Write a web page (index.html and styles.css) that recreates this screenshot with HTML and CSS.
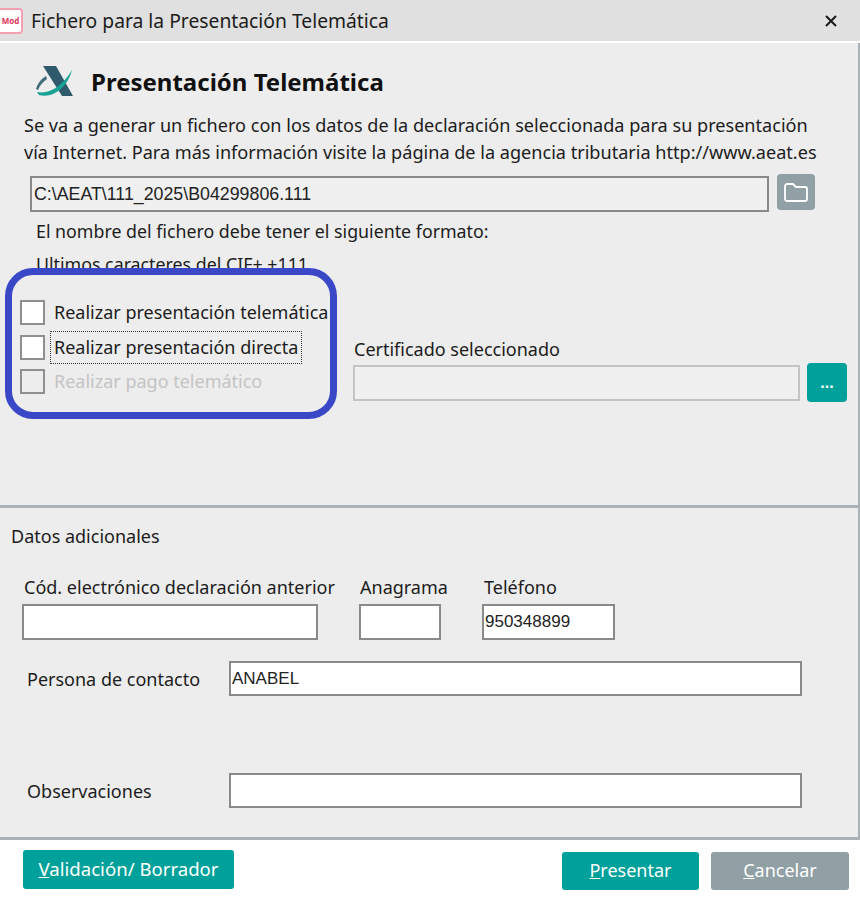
FILE: index.html
```html
<!DOCTYPE html>
<html lang="es">
<head>
    <meta charset="UTF-8">
    <title>Fichero para la Presentación Telemática</title>
    <link rel="stylesheet" href="styles.css">
</head>
<body>
    <div class="titlebar">
        <span class="app-icon">Mod</span>
        <span class="title">Fichero para la Presentación Telemática</span>
        <svg class="close" viewBox="0 0 12 12" width="12" height="12"><path d="M1 1l10 10M11 1L1 11" stroke="#1a1a1a" stroke-width="2" fill="none"/></svg>
    </div>

    <div class="panel top">
        <div class="heading">
            <svg class="logo" viewBox="0 0 37 30" width="37" height="30">
                <path d="M7 0H20L37 30H26Z" fill="#2f5a6b"/>
                <path d="M0 23C2 17 5 13 10 10L11 13C7 16 4 19 2 24Z" fill="#3f6d7c"/>
                <path d="M1 26C14 29 28 18 36 4C32 20 18 33 3 29Z" fill="#17a394"/>
            </svg>
            <h1>Presentación Telemática</h1>
        </div>
        <p class="intro">Se va a generar un fichero con los datos de la declaración seleccionada para su presentación<br>vía Internet. Para más información visite la página de la agencia tributaria http://www.aeat.es</p>
        <div class="file-row">
            <input class="field readonly file" type="text" value="C:\AEAT\111_2025\B04299806.111">
            <button class="icon-btn grey">
                <svg viewBox="0 0 26 22" width="26" height="22"><path d="M2 5a2 2 0 0 1 2-2h6l3 3h9a2 2 0 0 1 2 2v10a2 2 0 0 1-2 2H4a2 2 0 0 1-2-2Z" fill="none" stroke="#fff" stroke-width="1.8"/></svg>
            </button>
        </div>
        <p class="note">El nombre del fichero debe tener el siguiente formato:</p>
        <p class="note second">Ultimos caracteres del CIF+.+111</p>
        <div class="options">
            <div class="checks">
                <label class="check"><input type="checkbox"><span>Realizar presentación telemática</span></label>
                <label class="check"><input type="checkbox"><span class="focused">Realizar presentación directa</span></label>
                <label class="check off"><input type="checkbox" disabled><span>Realizar pago telemático</span></label>
            </div>
            <div class="cert">
                <div class="cert-label">Certificado seleccionado</div>
                <div class="cert-row">
                    <input class="field disabled cert-input" type="text">
                    <button class="icon-btn teal dots">...</button>
                </div>
            </div>
        </div>
        <div class="oval"></div>
    </div>

    <div class="panel extra">
        <div class="section">Datos adicionales</div>
        <div class="three">
            <div class="col code"><div class="lbl">Cód. electrónico declaración anterior</div><input class="field" type="text"></div>
            <div class="col ana"><div class="lbl">Anagrama</div><input class="field" type="text"></div>
            <div class="col tel"><div class="lbl">Teléfono</div><input class="field" type="text" value="950348899"></div>
        </div>
        <div class="row contact"><span class="lbl">Persona de contacto</span><input class="field wide" type="text" value="ANABEL"></div>
        <div class="row obs"><span class="lbl">Observaciones</span><input class="field wide" type="text"></div>
    </div>

    <div class="footer">
        <button class="btn teal first"><u>V</u>alidación/ Borrador</button>
        <div class="right">
            <button class="btn teal"><u>P</u>resentar</button>
            <button class="btn grey"><u>C</u>ancelar</button>
        </div>
    </div>
</body>
</html>
```

FILE: styles.css
```css
* {
    box-sizing: border-box;
}

body {
    margin: 0;
    width: 860px;
    height: 901px;
    overflow: hidden;
    background: #fff;
    color: #1c1c1c;
    font-family: "Noto Sans", "Open Sans", sans-serif;
    font-size: 18px;
}

p {
    margin: 0;
}

.titlebar {
    height: 41px;
    background: #e0e0e0;
    display: flex;
    align-items: center;
    padding-right: 23px;
}

.app-icon {
    width: 23px;
    height: 26px;
    margin-right: 8px;
    background: #fff;
    border: 2px solid #f4a0b2;
    border-left: 0;
    border-radius: 0 4px 4px 0;
    color: #e0365c;
    font-size: 8px;
    font-weight: 700;
    line-height: 22px;
    text-align: center;
}

.title {
    flex: 1;
    font-size: 19.3px;
}

.panel {
    background: #ededed;
    border-right: 2px solid #a9b2b5;
    position: relative;
}

.top {
    margin-top: 2px;
    height: 465px;
    padding: 23px 0 0 24px;
    border-bottom: 3px solid #a9b2b5;
}

.heading {
    display: flex;
    align-items: center;
    height: 30px;
    padding-left: 12px;
}

.logo {
    margin-right: 18px;
}

h1 {
    margin: 0;
    font-size: 24px;
    font-weight: 700;
    color: #111;
}

.intro {
    margin-top: 16px;
    font-size: 18.1px;
    line-height: 27px;
    white-space: nowrap;
}

.file-row {
    display: flex;
    align-items: flex-start;
    margin: 8px 0 0 6px;
}

.field {
    height: 36px;
    border: 2px solid #8a8a8a;
    background: #fff;
    padding: 0 1px;
    font-family: "Liberation Sans", sans-serif;
    font-size: 17px;
    color: #222;
    outline: 0;
    border-radius: 0;
}

.file {
    width: 739px;
    background: #f0f0f0;
    margin-top: 2px;
    padding: 0 2px;
    font-size: 17.8px;
}

.icon-btn {
    border: 0;
    border-radius: 4px;
    padding: 0;
    display: flex;
    align-items: center;
    justify-content: center;
}

.icon-btn.grey {
    width: 38px;
    height: 36px;
    margin-left: 8px;
    background: #90a0a5;
}

.note {
    margin-left: 12px;
    font-size: 17.8px;
    line-height: 22px;
}

.file-row + .note {
    margin-top: 8px;
}

.second {
    margin-top: 11px;
}

.options {
    display: flex;
    margin: 25px 0 0 -4px;
}

.checks {
    width: 334px;
}

.check {
    display: flex;
    align-items: center;
    height: 25px;
    margin-bottom: 9.5px;
}

.check input {
    appearance: none;
    width: 25px;
    height: 25px;
    margin: 0 9px 0 0;
    background: #fff;
    border: 2px solid #8f8f8f;
}

.check span {
    white-space: nowrap;
    line-height: 25px;
}

.check.off {
    color: #c4c4c4;
}

.check.off input {
    background: #ededed;
}

.focused {
    outline: 1px dotted #333;
    outline-offset: 3px;
}

.cert {
    margin-top: 35px;
}

.cert-label {
    line-height: 28px;
}

.cert-row {
    display: flex;
    align-items: flex-start;
}

.cert-input {
    width: 447px;
    margin: 2px 7px 0 -1px;
    border-color: #c4c4c4;
    background: #f0f0f0;
}

.icon-btn.teal {
    width: 40px;
    height: 39px;
    background: #00a19a;
    color: #fff;
    font-weight: 700;
    font-size: 16px;
}

.oval {
    position: absolute;
    left: 5px;
    top: 225px;
    width: 332px;
    height: 151px;
    border: 7px solid #3a48c8;
    border-radius: 28px;
}

.extra {
    height: 332px;
    padding: 17px 0 0 11px;
    border-bottom: 3px solid #a9b2b5;
}

.section {
    line-height: 22px;
}

.three {
    display: flex;
    margin: 28px 0 0 11px;
}

.lbl {
    line-height: 24px;
}

.col .field {
    display: block;
    width: 100%;
    margin-top: 5px;
}

.code {
    width: 296px;
    margin-right: 41px;
}

.code .lbl {
    white-space: nowrap;
    margin-left: 2px;
}

.ana {
    width: 82px;
    margin-right: 41px;
}

.ana .lbl {
    margin-left: 1px;
}

.tel {
    width: 133px;
}

.tel .lbl {
    margin-left: 2px;
}

.row {
    display: flex;
    align-items: center;
    height: 35px;
    padding-left: 16px;
}

.row .lbl {
    width: 202px;
}

.wide {
    width: 573px;
    height: 35px;
}

.contact {
    margin-top: 21px;
}

.obs {
    margin-top: 77px;
}

.footer {
    display: flex;
    justify-content: space-between;
    padding: 10px 11px 0 23px;
    background: #fff;
}

.right {
    display: flex;
    gap: 12px;
    padding-top: 2px;
}

.btn {
    width: 138px;
    height: 38px;
    padding: 0 0 3px;
    border: 0;
    border-radius: 3px;
    color: #fff;
    font-family: inherit;
    font-size: 18px;
}

.btn.teal {
    background: #00a19a;
    width: 137px;
}

.btn.grey {
    background: #90a0a5;
}

.btn.teal.first {
    width: 211px;
    height: 39px;
    font-size: 18.6px;
}
```
